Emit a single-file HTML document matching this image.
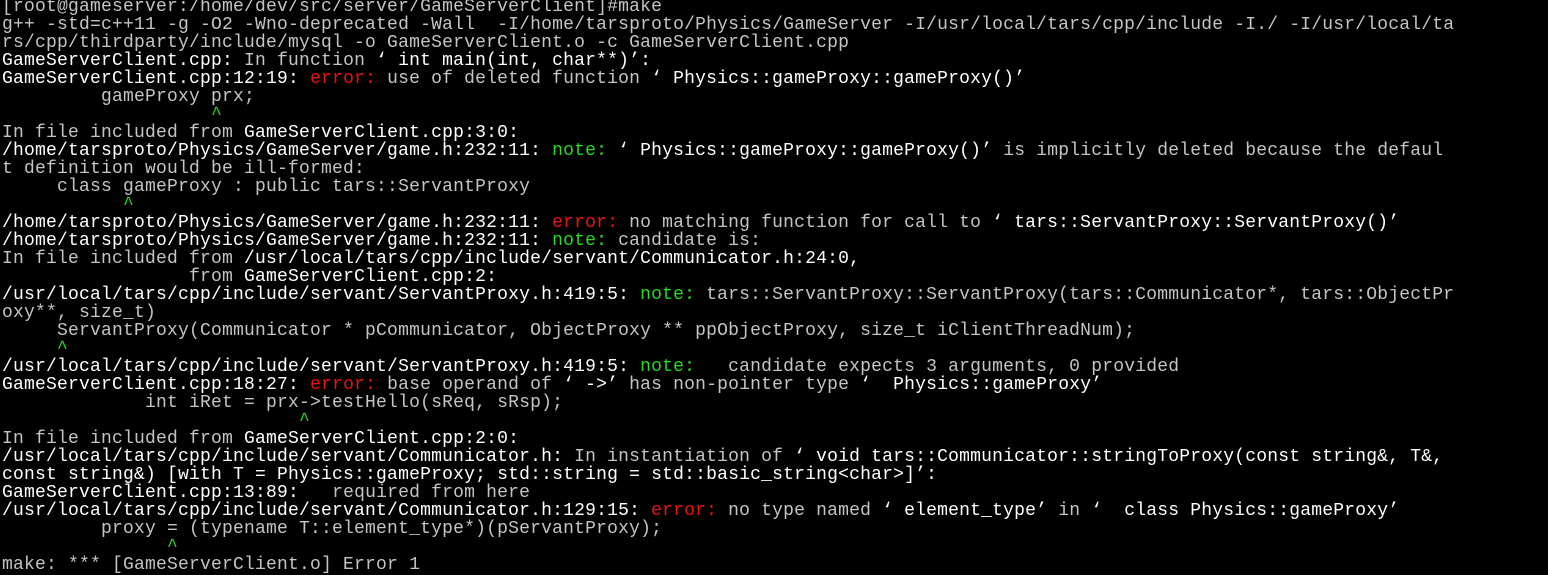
<!DOCTYPE html>
<html><head><meta charset="utf-8"><style>
html,body{margin:0;padding:0;background:#000;width:1548px;height:569px;overflow:hidden}
pre{margin:0;position:absolute;left:2px;top:-2px;font-family:"Liberation Mono","DejaVu Sans Mono",monospace;font-size:18px;letter-spacing:0.2px;line-height:18px;color:#c4c4c4;white-space:pre}
b{font-weight:normal;color:#fff}
.r{color:#ee1111}
.g{color:#22dd22}
</style></head><body><pre>[root@gameserver:/home/dev/src/server/GameServerClient]#make
g++ -std=c++11 -g -O2 -Wno-deprecated -Wall  -I/home/tarsproto/Physics/GameServer -I/usr/local/tars/cpp/include -I./ -I/usr/local/ta
rs/cpp/thirdparty/include/mysql -o GameServerClient.o -c GameServerClient.cpp
<b>GameServerClient.cpp:</b> In function <b>‘ int main(int, char**)’:</b>
<b>GameServerClient.cpp:12:19: </b><span class="r">error:</span> use of deleted function <b>‘ Physics::gameProxy::gameProxy()’</b>
         gameProxy prx;
<span class="g">                   ^</span>
In file included from <b>GameServerClient.cpp:3:0:</b>
<b>/home/tarsproto/Physics/GameServer/game.h:232:11: </b><span class="g">note:</span> <b>‘ Physics::gameProxy::gameProxy()’</b> is implicitly deleted because the defaul
t definition would be ill-formed:
     class gameProxy : public tars::ServantProxy
<span class="g">           ^</span>
<b>/home/tarsproto/Physics/GameServer/game.h:232:11: </b><span class="r">error:</span> no matching function for call to <b>‘ tars::ServantProxy::ServantProxy()’</b>
<b>/home/tarsproto/Physics/GameServer/game.h:232:11: </b><span class="g">note:</span> candidate is:
In file included from <b>/usr/local/tars/cpp/include/servant/Communicator.h:24:0,</b>
                 from <b>GameServerClient.cpp:2:</b>
<b>/usr/local/tars/cpp/include/servant/ServantProxy.h:419:5: </b><span class="g">note:</span> tars::ServantProxy::ServantProxy(tars::Communicator*, tars::ObjectPr
oxy**, size_t)
     ServantProxy(Communicator * pCommunicator, ObjectProxy ** ppObjectProxy, size_t iClientThreadNum);
<span class="g">     ^</span>
<b>/usr/local/tars/cpp/include/servant/ServantProxy.h:419:5: </b><span class="g">note:</span>   candidate expects 3 arguments, 0 provided
<b>GameServerClient.cpp:18:27: </b><span class="r">error:</span> base operand of <b>‘ -&gt;’</b> has non-pointer type <b>‘  Physics::gameProxy’</b>
             int iRet = prx-&gt;testHello(sReq, sRsp);
<span class="g">                           ^</span>
In file included from <b>GameServerClient.cpp:2:0:</b>
<b>/usr/local/tars/cpp/include/servant/Communicator.h:</b> In instantiation of <b>‘ void tars::Communicator::stringToProxy(const string&amp;, T&amp;,</b>
<b>const string&amp;) [with T = Physics::gameProxy; std::string = std::basic_string&lt;char&gt;]’:</b>
<b>GameServerClient.cpp:13:89: </b>  required from here
<b>/usr/local/tars/cpp/include/servant/Communicator.h:129:15: </b><span class="r">error:</span> no type named <b>‘ element_type’</b> in <b>‘  class Physics::gameProxy’</b>
         proxy = (typename T::element_type*)(pServantProxy);
<span class="g">               ^</span>
make: *** [GameServerClient.o] Error 1
</pre></body></html>
